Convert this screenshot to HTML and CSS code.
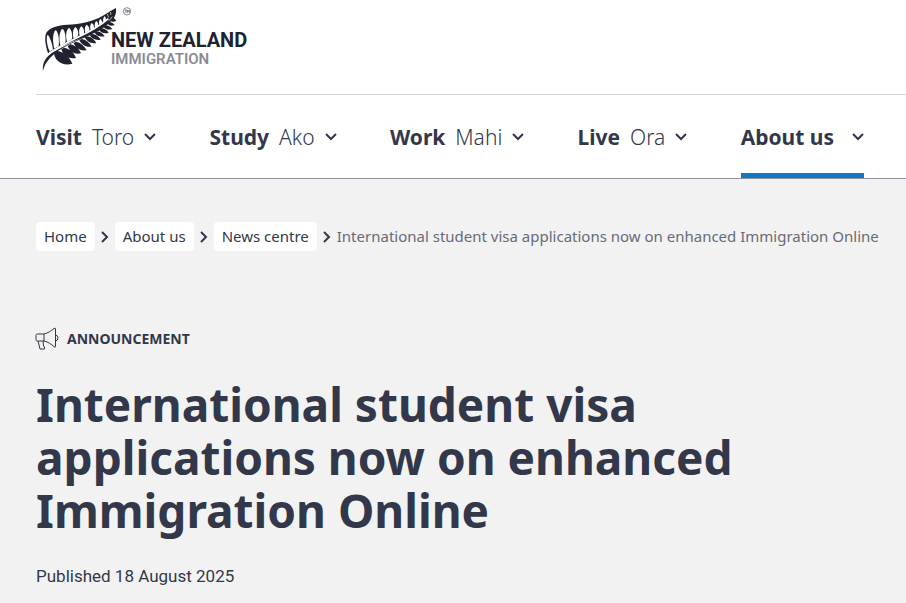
FILE: index.html
```html
<!DOCTYPE html>
<html lang="en-NZ">
<head>
	<meta charset="utf-8">
	<meta name="viewport" content="width=device-width, initial-scale=1">
	<title>International student visa applications now on enhanced Immigration Online</title>
	<link rel="stylesheet" href="styles.css">
</head>
<body>
	<header class="header">
		<div class="brand">
			<a class="logo" href="#" aria-label="New Zealand Immigration">
				<!-- silver fern -->
				<svg class="fern" viewBox="36 18 270 198" aria-hidden="true">
					<path class="ink" d="M54 160C45 132 43 108 50 97C60 82 82 76 112 74C150 73 190 64 217 48C236 37 246 30 258 24C260 44 252 58 238 68C215 86 190 99 160 112C126 126 88 140 54 160Z"/>
					<g class="gap">
						<path d="M59 154C50 135 48 110 53 104C60 110 67 132 69 149Z"/>
						<path d="M73 146C67 122 68 98 77 90C86 97 88 120 86 139Z"/>
						<path d="M91 137C86 116 88 93 97 86C106 92 108 112 106 128Z"/>
						<path d="M111 126C106 108 108 90 117 83C125 89 128 104 126 118Z"/>
						<path d="M131 116C127 102 128 88 136 81C144 86 146 98 144 109Z"/>
						<path d="M149 107C146 95 147 84 154 79C161 83 163 92 162 101Z"/>
						<path d="M166 99C163 88 164 79 170 74C177 78 179 86 178 93Z"/>
						<path d="M182 91C179 82 180 74 185 69C191 73 193 79 192 86Z"/>
						<path d="M195 83C193 75 194 68 199 63C204 67 206 73 204 78Z"/>
						<path d="M208 75C206 67 207 61 211 57C216 60 217 65 216 70Z"/>
						<path d="M220 66C218 59 220 53 224 49C228 52 228 57 227 61Z"/>
					</g>
					<path class="rib" d="M58 159C88 140 110 128 138 115C172 99 205 83 235 56"/>
					<path class="ink" d="M39 213C36 190 46 171 70 156C100 138 128 127 160 110C200 90 232 72 254 40C248 62 230 80 205 93C175 109 150 118 122 131C96 144 76 156 60 174C48 187 42 198 39 213Z"/>
					<path class="ink" d="M72 160C74 182 98 200 127 191C119 171 102 156 82 153ZM94 148C98 166 116 179 138 174C132 157 119 146 102 143ZM113 138C119 154 134 165 153 160C147 145 136 136 121 133ZM131 129C137 143 151 154 170 151C163 137 152 128 138 125ZM148 121C154 133 167 143 185 140C178 127 168 119 155 117ZM164 112C170 124 182 132 199 129C192 117 182 110 170 109ZM179 105C184 115 196 122 212 119C206 108 196 102 184 102ZM193 97C198 107 210 112 224 109C218 99 208 94 198 94ZM207 89C212 98 223 102 236 98C231 89 221 85 212 85ZM220 80C225 87 235 91 247 87C241 79 233 75 224 76ZM231 70C236 77 244 80 254 75C249 68 242 65 235 66ZM240 59C244 66 251 67 259 62C254 55 249 52 243 54Z"/>
					<path class="barb" d="M232 42L236 52M241 36L243 45M236 63L247 50"/>
					<circle class="ring" cx="291" cy="34" r="11"/>
					<path class="tm" d="M284 30H291M287.500 30V39M292 39V30L295 35L298 30V39"/>
				</svg>
				<span class="wordmark">
					<span class="wordmark-top">NEW ZEALAND</span>
					<span class="wordmark-sub">IMMIGRATION</span>
				</span>
			</a>
		</div>
		<nav class="nav" aria-label="Main">
			<button class="nav-item" type="button"><b>Visit</b><span>Toro</span><svg class="chevron" viewBox="0 0 12 8"><path d="M1 1L6 6L11 1"/></svg></button>
			<button class="nav-item" type="button"><b>Study</b><span>Ako</span><svg class="chevron" viewBox="0 0 12 8"><path d="M1 1L6 6L11 1"/></svg></button>
			<button class="nav-item" type="button"><b>Work</b><span>Mahi</span><svg class="chevron" viewBox="0 0 12 8"><path d="M1 1L6 6L11 1"/></svg></button>
			<button class="nav-item" type="button"><b>Live</b><span>Ora</span><svg class="chevron" viewBox="0 0 12 8"><path d="M1 1L6 6L11 1"/></svg></button>
			<button class="nav-item active" type="button"><b>About us</b><svg class="chevron" viewBox="0 0 12 8"><path d="M1 1L6 6L11 1"/></svg></button>
		</nav>
	</header>

	<main class="page">
		<nav class="crumbs" aria-label="Breadcrumb">
			<a class="crumb" href="#">Home</a>
			<svg class="sep" viewBox="0 0 8 12"><path d="M1 1L6 6L1 11"/></svg>
			<a class="crumb" href="#">About us</a>
			<svg class="sep" viewBox="0 0 8 12"><path d="M1 1L6 6L1 11"/></svg>
			<a class="crumb" href="#">News centre</a>
			<svg class="sep" viewBox="0 0 8 12"><path d="M1 1L6 6L1 11"/></svg>
			<span class="crumb-here">International student visa applications now on enhanced Immigration Online</span>
		</nav>

		<div class="kind">
			<svg class="megaphone" viewBox="0 0 24 24" aria-hidden="true">
				<path d="M9 7H2.500Q1 7 1 8.500V12.500Q1 14 2.500 14H9ZM9 7C13 6 16 4 19 1.500Q20.500 .5 20.500 2V19.500Q20.500 21 19 19.500C16 17 13 15 9 14M20.500 8Q23 8.500 23 11Q23 13.500 20.500 14M3 14L5 22H9.500V20L8.500 19L8 14"/>
			</svg>
			<span>ANNOUNCEMENT</span>
		</div>
		<h1 class="title">International student visa applications now on enhanced Immigration Online</h1>
		<p class="published">Published 18 August 2025</p>
	</main>
</body>
</html>
```
FILE: styles.css
```css
* {
	box-sizing:border-box;
}
body {
	margin:0;
	background:#f2f2f2;
	color:#32384a;
	font-family:"Noto Sans", sans-serif;
}
a {
	color:inherit;
	text-decoration:none;
}

/* header */
.header {
	background:#fff;
	border-bottom:1px solid #92929e;
}
.brand {
	margin-left:36px;
	padding:6px 0 22px 6px;
	border-bottom:1px solid #d4d4d7;
}
.logo {
	display:inline-flex;
	align-items:flex-start;
	vertical-align:top;
}
.fern {
	width:90px;
	height:66px;
}
.ink {
	fill:#20232f;
}
.gap {
	fill:#fff;
}
.rib {
	fill:none;
	stroke:#fff;
	stroke-width:5px;
}
.barb {
	fill:none;
	stroke:#fff;
	stroke-width:2px;
}
.ring, .tm {
	fill:none;
	stroke:#4c4f59;
	stroke-width:2px;
}
.wordmark {
	display:flex;
	flex-direction:column;
	margin-left:-21px;
	padding-top:25px;
	font-family:Roboto, sans-serif;
	line-height:19px;
}
.wordmark-top {
	color:#20232f;
	font-size:20px;
	font-weight:700;
}
.wordmark-sub {
	color:#8a8b94;
	font-size:15px;
	font-weight:600;
}

/* main menu */
.nav {
	display:flex;
	justify-content:space-between;
	padding:0 42px 0 36px;
}
.nav-item {
	display:flex;
	align-items:center;
	gap:10px;
	height:83px;
	padding:5px 0 0;
	border:0;
	border-bottom:5px solid transparent;
	background:none;
	color:#32384a;
	font-family:"Noto Sans", sans-serif;
	font-size:21px;
	line-height:30px;
}
.nav-item span {
	font-weight:300;
}
.nav-item.active {
	gap:18px;
	border-bottom-color:#1478be;
}
.chevron {
	width:12px;
	height:8px;
}
.chevron path, .sep path {
	fill:none;
	stroke:#32384a;
	stroke-width:2px;
}

/* page head */
.page {
	padding:43px 20px 16px 36px;
}
.crumbs {
	display:flex;
	align-items:center;
	flex-wrap:wrap;
	gap:6px;
	font-size:15px;
	line-height:28px;
}
.crumb {
	padding:0 8px 1px;
	border-radius:4px;
	background:#fff;
}
.crumb-here {
	padding-bottom:1px;
	color:#686b78;
}
.sep {
	width:8px;
	height:12px;
}
.kind {
	display:flex;
	align-items:center;
	gap:8px;
	margin:75px 0 0 -1px;
	font-size:14px;
	font-weight:700;
	line-height:26px;
}
.megaphone {
	width:24px;
	height:24px;
	fill:none;
	stroke:#32384a;
	stroke-width:1px;
}
.title {
	max-width:740px;
	margin:26px 0 0;
	font-size:46px;
	font-weight:700;
	line-height:53px;
}
.published {
	margin:25px 0 0;
	font-family:Roboto, sans-serif;
	font-size:17px;
	line-height:28px;
}
```
